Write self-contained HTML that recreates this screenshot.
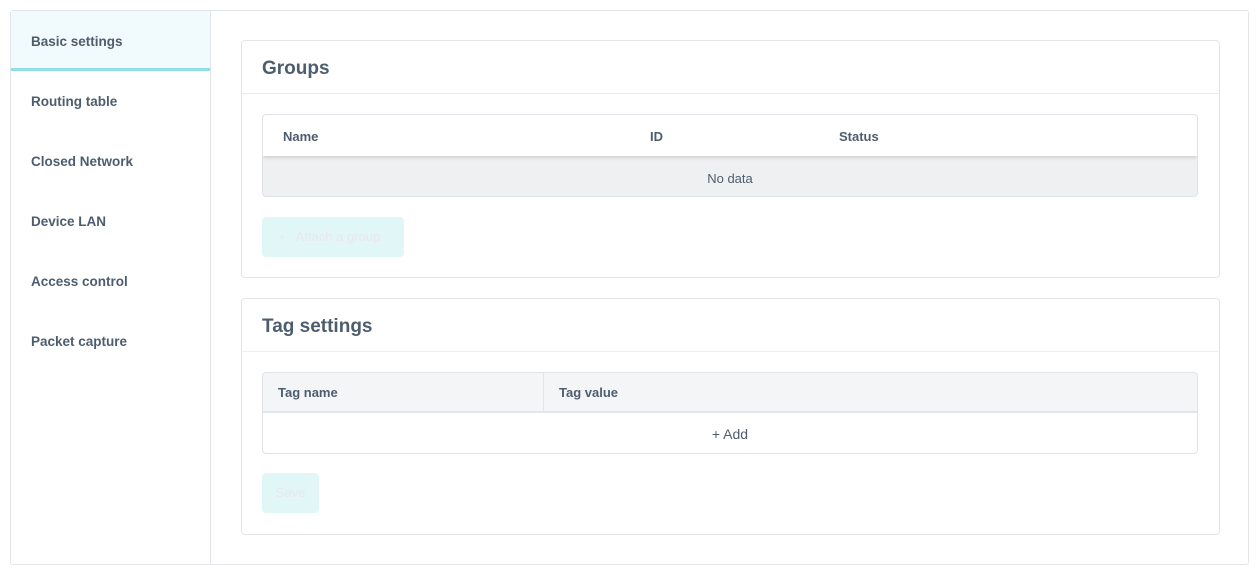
<!DOCTYPE html><html><head><style>
*{box-sizing:border-box;margin:0;padding:0}
body{width:1259px;height:575px;background:#fff;font-family:"Liberation Sans",sans-serif;color:#4a5568;position:relative;overflow:hidden}
.a{position:absolute}
.outer{left:10px;top:10px;width:1239px;height:555px;border:1px solid #e2e5ea;border-radius:3px}
.side{left:10px;top:10px;width:201px;height:555px;border-right:1px solid #e2e5ea}
.tab{position:absolute;left:31px;font-size:13.5px;font-weight:bold;color:#4e5d6e}
.card{border:1px solid #e2e5ea;border-radius:4px;left:241px;width:979px}
.h{font-size:19px;font-weight:bold;color:#4e5d6e;left:262px}
.th{font-size:13px;font-weight:bold;color:#4e5d6e}
</style></head><body>
<div class="a outer"></div>
<div class="a side"></div>
<div class="a" style="left:11px;top:11px;width:199px;height:57px;background:#f1fafc"></div>
<div class="a" style="left:11px;top:68px;width:199px;height:3px;background:#8fdfe6"></div>
<div class="tab" style="top:34px">Basic settings</div>
<div class="tab" style="top:94px">Routing table</div>
<div class="tab" style="top:154px">Closed Network</div>
<div class="tab" style="top:214px">Device LAN</div>
<div class="tab" style="top:274px">Access control</div>
<div class="tab" style="top:334px">Packet capture</div>

<div class="a card" style="top:40px;height:238px"></div>
<div class="a" style="left:242px;top:93px;width:977px;height:1px;background:#e8eaee"></div>
<div class="a h" style="top:58px">Groups</div>
<div class="a" style="left:262px;top:114px;width:936px;height:83px;border:1px solid #dfe2e7;border-radius:4px;background:#eff0f2;overflow:hidden">
<div style="height:41px;background:#fff;box-shadow:0 2px 3px rgba(0,0,0,.12)"></div></div>
<div class="a th" style="left:283px;top:129px">Name</div>
<div class="a th" style="left:650px;top:129px">ID</div>
<div class="a th" style="left:839px;top:129px">Status</div>
<div class="a" style="left:262px;top:171px;width:936px;text-align:center;font-size:13px;color:#4e5d6e">No data</div>
<div class="a" style="left:262px;top:217px;width:142px;height:40px;background:#e0f6f7;border-radius:4px;font-size:13px;color:#ebe7ea;line-height:40px;padding-left:16px">+&nbsp;&nbsp; Attach a group</div>

<div class="a card" style="top:298px;height:237px"></div>
<div class="a" style="left:242px;top:351px;width:977px;height:1px;background:#eef0f2"></div>
<div class="a h" style="top:316px">Tag settings</div>
<div class="a" style="left:262px;top:372px;width:936px;height:82px;border:1px solid #dfe2e7;border-radius:4px;overflow:hidden">
<div style="height:40px;background:#f4f5f7;border-bottom:2px solid #e2e5ea"></div></div>
<div class="a" style="left:543px;top:373px;width:1px;height:39px;background:#e5e7ea"></div>
<div class="a th" style="left:278px;top:385px">Tag name</div>
<div class="a th" style="left:559px;top:385px">Tag value</div>
<div class="a" style="left:262px;top:426px;width:936px;text-align:center;font-size:14px;color:#4e5d6e">+ Add</div>
<div class="a" style="left:262px;top:473px;width:57px;height:40px;background:#e0f6f7;border-radius:4px;font-size:13px;color:#ebe7ea;line-height:40px;text-align:center">Save</div>
</body></html>
